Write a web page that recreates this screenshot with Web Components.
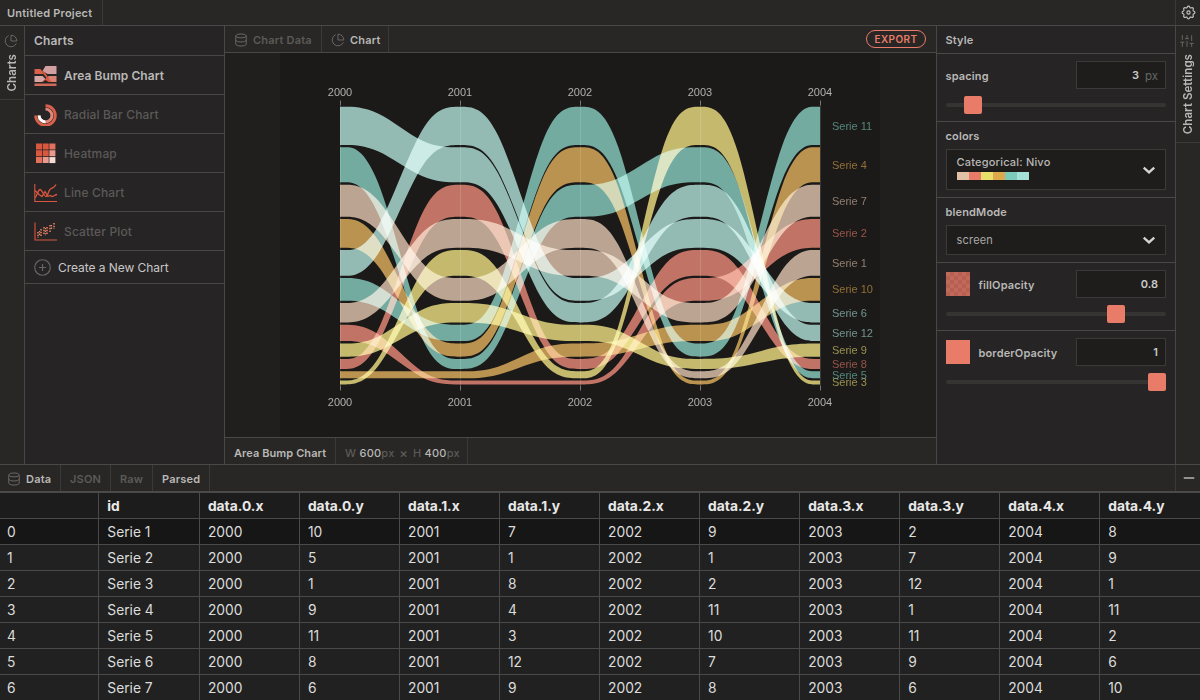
<!DOCTYPE html>
<html lang="en">
<head>
<meta charset="utf-8">
<title>Untitled Project</title>
<style>
  html, body { margin: 0; height: 100%; }
  body {
    --line: #484847;
    --faint: #3b3a39;
    --bar: #282725;
    --panel: #262425;
    --text: #b9b8b6;
    --dim: #5b5a58;
    --accent: #e87c69;
    background: #282725;
    color: var(--text);
    font-family: Inter, "Liberation Sans", sans-serif;
    font-size: 11px;
    font-weight: 600;
    overflow: hidden;
  }
</style>
</head>
<body>
<chart-studio></chart-studio>

<script>
const ICONS = {
  pie: `<path d="M21.2 15.9A10 10 0 1 1 8 2.8"/><path d="M22 12A10 10 0 0 0 12 2v10z"/>`,
  database: `<ellipse cx="12" cy="5" rx="9" ry="3.4"/><path d="M21 12c0 1.9-4 3.4-9 3.4S3 13.9 3 12"/><path d="M3 5v14c0 1.9 4 3.4 9 3.4s9-1.5 9-3.4V5"/>`,
  sliders: `<path d="M4 22v-8M4 10V2M12 22V12M12 8V2M20 22v-6M20 12V2M.5 14h7M8.5 8h7M16.5 16h7"/>`,
  plus: `<circle cx="12" cy="12" r="11"/><path d="M12 7v10M7 12h10"/>`,
  minus: `<path d="M3 12h18"/>`,
  chevron: `<path d="M3 8l9 8 9-8"/>`,
  cog: `<path d="M10.325 4.317c.426-1.756 2.924-1.756 3.35 0a1.724 1.724 0 002.573 1.066c1.543-.94 3.31.826 2.37 2.37a1.724 1.724 0 001.065 2.572c1.756.426 1.756 2.924 0 3.35a1.724 1.724 0 00-1.066 2.573c.94 1.543-.826 3.31-2.37 2.37a1.724 1.724 0 00-2.572 1.065c-.426 1.756-2.924 1.756-3.35 0a1.724 1.724 0 00-2.573-1.066c-1.543.94-3.31-.826-2.37-2.37a1.724 1.724 0 00-1.065-2.572c-1.756-.426-1.756-2.924 0-3.35a1.724 1.724 0 001.066-2.573c-.94-1.543.826-3.31 2.37-2.37.996.608 2.296.07 2.572-1.065z"/><circle cx="12" cy="12" r="2.3"/>`
};

const THUMBS = {
  area: `<g transform="translate(.5 1)"><path d="M0 3h6l3 5H0z" fill="#d9604a"/>
    <path d="M8 5l3-5h11v8h-9z" fill="#d3a0a2"/>
    <path d="M0 10h8l3 3-3 3H0z" fill="#d6a7a4"/>
    <path d="M14 10h8v6h-6l-3-3z" fill="#d98172"/>
    <path d="M6 4l4 2 7 10h-3l-3-2-3 2H7l5-4z" fill="#dc5a43"/>
    <path d="M0 17.5h22V20H0z" fill="#cf6a58"/></g>`,
  radial: `<g fill="none" stroke-width="2.9"><path d="M11.5 1.7a9.800 9.800 0 1 1-9.800 9.800" stroke="#d9604a"/><path d="M11.5 5.100a6.400 6.400 0 1 1-6.400 6.400" stroke="#e0877a"/><path d="M5.100 11.500a6.400 6.400 0 0 0 6.400 6.400" stroke="#fff"/></g>`,
  heat: `<g transform="translate(2 .5)"><path d="M0 0h6v6H0zM0 6.800h6v6H0zM6.700 6.800h6v6h-6zM6.700 0h6v6h-6z" fill="#d9573f"/><path d="M13.400 0h6v6h-6zM0 13.600h6v6H0z" fill="#e2705c"/><path d="M13.400 6.800h6v6h-6zM6.700 13.600h6v6h-6z" fill="#e99a8d"/><path d="M13.400 13.600h6v6h-6z" fill="#f6dcd6"/></g>`,
  line: `<g fill="none" stroke="#d9573f" transform="translate(0 .5)"><path d="M.8 1.500v17.500H23" stroke-width="1.100"/><path d="M1 15c2-1 3-8 5-8s4 7 6 7 2-5 4-7 4-1 6-5" stroke-width="1.300"/><path d="M1 8l4 4 3 2 3-5 3 5 2-1 2 1c2 0 3-2 5-2" stroke-width="1.300"/></g>`,
  scatter: `<path d="M1 1.500v17.500h22" fill="none" stroke="#d9573f" stroke-width="1.100"/><path d="M4 11v6M7 8v8M10 6v8M13 6v8M16 4v7M20 2v6" stroke="#d9705c" stroke-width="1.800" stroke-dasharray="1.600 1.100" fill="none"/><path d="M5.500 10v5M11.500 7v8M17.500 4v5" stroke="#c99a6a" stroke-width="1.200" stroke-dasharray="1.300 1.300"/>`
};

class BaseElement extends HTMLElement {
  constructor() {
    super();
    this.attachShadow({ mode: "open" });
  }

  connectedCallback() {
    const template = document.createElement("template");
    template.innerHTML = this.template;
    this.shadowRoot.appendChild(template.content.cloneNode(true));
  }
}

class UiIcon extends BaseElement {
  get template() {
    const size = this.getAttribute("size") || 14;
    const width = this.getAttribute("weight") || 1.7;
    return `
      <style>
        :host { display: block; flex: none; color: #686765; }
        svg { display: block; fill: none; stroke: currentColor; overflow: visible; }
      </style>
      <svg width="${size}" height="${size}" viewBox="0 0 24 24" stroke-width="${width}">${ICONS[this.getAttribute("name")]}</svg>`;
  }
}

class TabCell extends BaseElement {
  get template() {
    return `
      <style>
        :host {
          display: flex;
          align-items: center;
          gap: 5px;
          box-sizing: border-box;
          height: 100%;
          padding: 1px 9px 0;
          border-right: 1px solid var(--faint);
          white-space: nowrap;
          letter-spacing: .2px;
        }
        :host([off]) { color: var(--dim); }
      </style>
      <slot></slot>`;
  }
}

class SideRail extends BaseElement {
  get template() {
    return `
      <style>
        :host { display: block; width: 24px; flex: none; background: var(--bar); }
        .tab {
          display: flex;
          flex-direction: column;
          align-items: center;
          box-sizing: border-box;
          height: var(--tab);
          padding-top: 8px;
          gap: 6px;
          border-bottom: 1px solid var(--faint);
        }
        ui-icon { margin-right: 3px; }
        span {
          writing-mode: vertical-rl;
          transform: rotate(180deg);
          font-size: 11.5px;
          line-height: 16px;
          letter-spacing: .05px;
        }
      </style>
      <div class="tab"><ui-icon name="${this.getAttribute("icon")}"></ui-icon><span><slot></slot></span></div>`;
  }
}

class ChartItem extends BaseElement {
  get template() {
    return `
      <style>
        :host {
          display: flex;
          align-items: center;
          gap: 7px;
          box-sizing: border-box;
          height: 39px;
          padding: 1px 0 0 9px;
          border-bottom: 1px solid var(--line);
          font-size: 12px;
          font-weight: 500;
          letter-spacing: .15px;
          color: var(--dim);
        }
        :host([active]) { color: var(--text); font-weight: 600; letter-spacing: .05px; }
      </style>
      <svg width="23" height="22" viewBox="0 0 23 22">${THUMBS[this.getAttribute("thumb")]}</svg>
      <slot></slot>`;
  }
}

class NumField extends BaseElement {
  get template() {
    return `
      <style>
        :host {
          display: flex;
          justify-content: flex-end;
          align-items: center;
          gap: 6px;
          box-sizing: border-box;
          width: 90px;
          height: 28px;
          margin-left: auto;
          padding-right: 7px;
          background: #1e1d1c;
          border: 1px solid var(--faint);
          color: #cac9c7;
          letter-spacing: 0;
        }
        i { font-style: normal; font-weight: 400; font-size: 11.5px; padding-top: 1px; color: #686765; }
      </style>
      <slot></slot>${this.hasAttribute("unit") ? `<i>${this.getAttribute("unit")}</i>` : ""}`;
  }
}

class RangeSlider extends BaseElement {
  get template() {
    return `
      <style>
        :host { display: flex; align-items: center; height: 18px; }
        .track { display: flex; align-items: center; width: 100%; height: 4px; border-radius: 2px; background: #353433; }
        .thumb { width: 18px; height: 18px; border-radius: 2px; background: var(--accent); margin-left: ${this.getAttribute("at")}px; }
      </style>
      <div class="track"><div class="thumb"></div></div>`;
  }
}

class SelectField extends BaseElement {
  get template() {
    return `
      <style>
        :host {
          display: flex;
          align-items: center;
          justify-content: space-between;
          box-sizing: border-box;
          padding: 0 9px 0 10px;
          background: #1e1d1c;
          border: 1px solid var(--faint);
          font-weight: 500;
          letter-spacing: .2px;
        }
        ui-icon { color: #d6d5d3; }
      </style>
      <div><slot></slot></div><ui-icon name="chevron" weight="4"></ui-icon>`;
  }
}

class StyleSection extends BaseElement {
  get template() {
    return `
      <style>
        :host {
          display: block;
          box-sizing: border-box;
          padding: 0 9px 0 8.5px;
          border-bottom: 1px solid var(--line);
          font-size: 11px;
          font-weight: 600;
          letter-spacing: .15px;
        }
        :host(:last-of-type) { border-bottom: 0; }
      </style>
      <slot></slot>`;
  }
}

class BumpChart extends BaseElement {
  get series() {
    // one value per year, 2000 to 2004
    return [
      [10, 7, 9, 2, 8], [5, 1, 1, 7, 9], [1, 8, 2, 12, 1], [9, 4, 11, 1, 11],
      [11, 3, 10, 11, 2], [8, 12, 7, 9, 6], [6, 9, 8, 6, 10], [3, 10, 3, 8, 3],
      [4, 6, 5, 3, 4], [2, 2, 4, 5, 7], [7, 5, 12, 4, 12], [12, 11, 6, 10, 5]
    ];
  }

  // uniform cubic b-spline through the control points
  basis(points) {
    const p = [points[0], points[0], ...points, points[points.length - 1], points[points.length - 1]];
    const mix = (a, b, u, v, w) => `${((a[0] * u + b[0] * v) / w).toFixed(2)} ${((a[1] * u + b[1] * v) / w).toFixed(2)}`;
    let d = `${p[0][0]} ${p[0][1]}`;
    for (let i = 1; i < p.length - 2; i++) {
      const [a, b, c] = [p[i], p[i + 1], p[i + 2]];
      const end = [(a[0] + 4 * b[0] + c[0]) / 6, (a[1] + 4 * b[1] + c[1]) / 6];
      d += `C${mix(a, b, 2, 1, 3)} ${mix(a, b, 1, 2, 3)} ${end[0].toFixed(2)} ${end[1].toFixed(2)}`;
    }
    return d + `L${p[p.length - 1][0]} ${p[p.length - 1][1]}`;
  }

  get template() {
    const colors = ["#e0c0a6", "#e87c69", "#ecdd74", "#dda94b", "#7acbbb", "#a8e0d6"];
    const step = 120, pad = 36, spacing = 3;
    const unit = (280 - 12 * spacing) / 78;
    const top = v => {
      let y = spacing / 2;
      for (let k = 12; k > v; k--) y += k * unit + spacing;
      return y;
    };
    let areas = "", labels = "", axis = "", grid = "";
    this.series.forEach((values, n) => {
      const upper = [], lower = [];
      values.forEach((v, i) => {
        [-pad, 0, pad].forEach(dx => {
          const x = i * step + dx;
          if (x < 0 || x > 480) return;
          upper.push([x, top(v) - .3]);
          lower.push([x, top(v) + v * unit + .4]);
        });
      });
      const color = colors[n % 6];
      areas += `<path d="M${this.basis(upper)}L${this.basis(lower.reverse())}Z" fill="${color}" fill-opacity=".8"/>`;
      const last = values[4];
      labels += `<text x="492" y="${top(last) + last * unit / 2 + 4}" fill="${color}" fill-opacity=".6">Serie ${n + 1}</text>`;
    });
    for (let i = 0; i < 5; i++) {
      const x = i * step;
      grid += `<path d="M${x + .5} 0v280"/>`;
      axis += `<path d="M${x + .5} 0v-5M${x + .5} 280v5" stroke="#777"/>
        <text x="${x}" y="-9.500" text-anchor="middle" fill="#b0b0ae">${2000 + i}</text>
        <text x="${x}" y="300" text-anchor="middle" fill="#b0b0ae">${2000 + i}</text>`;
    }
    return `
      <style>
        :host { display: block; flex: none; width: 600px; height: 400px; background: #1b1a19; }
        svg { display: block; isolation: isolate; font: 400 11px "Liberation Sans", sans-serif; }
        .areas path { mix-blend-mode: screen; }
      </style>
      <svg width="600" height="400">
        <rect width="600" height="400" fill="#1b1a19"/>
        <g transform="translate(60 60.5)" stroke="#3a3938">${grid}</g>
        <g class="areas" transform="translate(60 60.5)">${areas}</g>
        <g transform="translate(60 60.5)">${axis}${labels}</g>
      </svg>`;
  }
}

class DataTable extends BaseElement {
  get template() {
    const head = ["", "id"];
    for (let i = 0; i < 5; i++) head.push(`data.${i}.x`, `data.${i}.y`);
    const rows = [
      [10, 7, 9, 2, 8], [5, 1, 1, 7, 9], [1, 8, 2, 12, 1], [9, 4, 11, 1, 11],
      [11, 3, 10, 11, 2], [8, 12, 7, 9, 6], [6, 9, 8, 6, 10]
    ];
    const cells = list => list.map(c => `<span>${c}</span>`).join("");
    const body = rows.map((row, n) => {
      const list = [n, `Serie ${n + 1}`];
      row.forEach((y, i) => list.push(2000 + i, y));
      return `<div class="row">${cells(list)}</div>`;
    }).join("");
    return `
      <style>
        :host { display: block; font-size: 13.8px; font-weight: 400; color: #dcdcdb; }
        .row { display: grid; grid-template-columns: 99px 100.600px repeat(10, 1fr); height: 26px; background: #212121; }
        .row:nth-of-type(2) { background: #161616; }
        .head { background: #1c1c1c; font-weight: 700; color: #e8e8e7; }
        span {
          box-sizing: border-box;
          height: 26px;
          padding-left: 8.300px;
          line-height: 27px;
          border-right: 1px solid #4a4a4a;
          border-bottom: 1px solid #4a4a4a;
        }
        span:first-child { padding-left: 7px; }
        span:last-child { border-right: 0; }
      </style>
      <div class="row head">${cells(head)}</div>${body}`;
  }
}

class ChartStudio extends BaseElement {
  get template() {
    const swatches = ["#e0c0a6", "#e87c69", "#ebdf6c", "#dda94b", "#7acbbb", "#a4e0d5"]
      .map(c => `<b style="background:${c}"></b>`).join("");
    return `
      <style>
        :host { display: flex; flex-direction: column; width: 1200px; height: 700px; overflow: hidden; }
        .bar { display: flex; align-items: center; box-sizing: border-box; background: var(--bar); flex: none; }
        .top { height: 26px; border-bottom: 1px solid var(--line); }
        .top tab-cell { padding: 0 9px 0 7px; width: 103px; }
        .end { display: flex; align-items: center; justify-content: center; box-sizing: border-box; width: 25px; height: 100%; margin-left: auto; border-left: 1px solid var(--faint); }
        .top .end ui-icon { color: #c4c3c1; margin-left: 1px; margin-top: -1px; }
        .data .end ui-icon { color: #a3a2a0; margin-left: 2px; }
        .middle { display: flex; height: 438px; flex: none; }
        .charts { width: 199px; flex: none; background: var(--panel); border: solid var(--line); border-width: 0 1px; }
        .title { box-sizing: border-box; height: 30px; line-height: 30px; padding-left: 9px; font-size: 12px; letter-spacing: .15px; border-bottom: 1px solid var(--line); }
        .new { display: flex; align-items: center; gap: 7px; box-sizing: border-box; height: 33px; padding-left: 9px; font-size: 12px; font-weight: 400; letter-spacing: -.05px; border-bottom: 1px solid var(--line); color: #c8c7c5; }
        .center { display: flex; flex-direction: column; flex: 1; min-width: 0; }
        .tabs { height: 27px; border-bottom: 1px solid var(--line); }
        .tabs button {
          margin: 0 10px 0 auto;
          width: 60px;
          height: 18px;
          padding: 0;
          border: 1px solid var(--accent);
          border-radius: 9px;
          background: none;
          color: var(--accent);
          font: 600 10px/17px Inter, sans-serif;
          letter-spacing: .4px;
        }
        .stage { display: flex; align-items: center; justify-content: center; flex: 1; min-height: 0; padding-right: 1px; overflow: hidden; background: #201f1d; }
        .foot { height: 27px; border-top: 1px solid var(--line); }
        .foot tab-cell { letter-spacing: .08px; padding-top: 3px; }
        .foot .size { gap: 0; white-space: pre; font-weight: 500; letter-spacing: .25px; }
        .size em { font-style: normal; color: var(--dim); }
        .size .by { font-size: 13px; padding: 0 1px; }
        .style { width: 238px; flex: none; background: var(--panel); border: solid var(--line); border-width: 0 1px; }
        .style .title { height: 28px; line-height: 29px; font-size: 11px; padding-left: 8.500px; }
        .row { display: flex; align-items: center; }
        .name { padding-top: 2px; }
        .swatches { display: flex; margin-top: 4px; }
        .swatches b { width: 12px; height: 8px; }
        .chip { width: 24px; height: 24px; margin-right: 9px; background: var(--accent); }
        .check { background: repeating-conic-gradient(#b65f52 0 25%, #c16a5b 0 50%) 0 0 / 8px 8px; }
        .data { height: 29px; border-top: 1px solid var(--line); border-bottom: 2px solid #4a4a4a; }
        .data tab-cell { padding-top: 2px; }
        .data tab-cell:first-child { padding-left: 7px; }
      </style>
      <div class="bar top"><tab-cell>Untitled Project</tab-cell><div class="end"><ui-icon name="cog" size="17" weight="1.600"></ui-icon></div></div>
      <div class="middle">
        <side-rail icon="pie" style="--tab:74px">Charts</side-rail>
        <div class="charts">
          <div class="title">Charts</div>
          <chart-item thumb="area" active>Area Bump Chart</chart-item>
          <chart-item thumb="radial">Radial Bar Chart</chart-item>
          <chart-item thumb="heat">Heatmap</chart-item>
          <chart-item thumb="line">Line Chart</chart-item>
          <chart-item thumb="scatter">Scatter Plot</chart-item>
          <div class="new"><ui-icon name="plus" size="17" weight="1.600"></ui-icon>Create a New Chart</div>
        </div>
        <div class="center">
          <div class="bar tabs">
            <tab-cell off style="width:97px"><ui-icon name="database"></ui-icon>Chart Data</tab-cell>
            <tab-cell style="width:67px"><ui-icon name="pie"></ui-icon>Chart</tab-cell>
            <button>EXPORT</button>
          </div>
          <div class="stage"><bump-chart></bump-chart></div>
          <div class="bar foot">
            <tab-cell style="width:111px">Area Bump Chart</tab-cell>
            <tab-cell class="size" style="width:132px"><em>W </em>600<em>px</em><em class="by"> × </em><em>H </em>400<em>px</em></tab-cell>
          </div>
        </div>
        <div class="style">
          <div class="title">Style</div>
          <style-section style="height:68px">
            <div class="row" style="padding:7px 0"><span class="name">spacing</span><num-field unit="px">3</num-field></div>
            <range-slider at="18"></range-slider>
          </style-section>
          <style-section style="height:76px;padding-top:7px">
            <div style="height:20px;line-height:15px">colors</div>
            <select-field style="height:41px"><div style="line-height:12px;margin-top:-3px">Categorical: Nivo</div><div class="swatches">${swatches}</div></select-field>
          </style-section>
          <style-section style="height:65px;padding-top:7px">
            <div style="height:20px;line-height:15px">blendMode</div>
            <select-field style="height:30px;font-weight:400"><span style="color:#a9a8a6">screen</span></select-field>
          </style-section>
          <style-section style="height:68px">
            <div class="row" style="padding:7px 0"><div class="chip check"></div><span class="name">fillOpacity</span><num-field>0.8</num-field></div>
            <range-slider at="161"></range-slider>
          </style-section>
          <style-section style="height:68px">
            <div class="row" style="padding:7px 0"><div class="chip"></div><span class="name">borderOpacity</span><num-field>1</num-field></div>
            <range-slider at="202"></range-slider>
          </style-section>
        </div>
        <side-rail icon="sliders" style="--tab:117px">Chart Settings</side-rail>
      </div>
      <div class="bar data">
        <tab-cell style="width:61px"><ui-icon name="database"></ui-icon>Data</tab-cell>
        <tab-cell off style="width:50px">JSON</tab-cell>
        <tab-cell off style="width:42px">Raw</tab-cell>
        <tab-cell style="width:57px">Parsed</tab-cell>
        <div class="end"><ui-icon name="minus" weight="3"></ui-icon></div>
      </div>
      <data-table></data-table>`;
  }
}

customElements.define("ui-icon", UiIcon);
customElements.define("tab-cell", TabCell);
customElements.define("side-rail", SideRail);
customElements.define("chart-item", ChartItem);
customElements.define("num-field", NumField);
customElements.define("range-slider", RangeSlider);
customElements.define("select-field", SelectField);
customElements.define("style-section", StyleSection);
customElements.define("bump-chart", BumpChart);
customElements.define("data-table", DataTable);
customElements.define("chart-studio", ChartStudio);
</script>
</body>
</html>
